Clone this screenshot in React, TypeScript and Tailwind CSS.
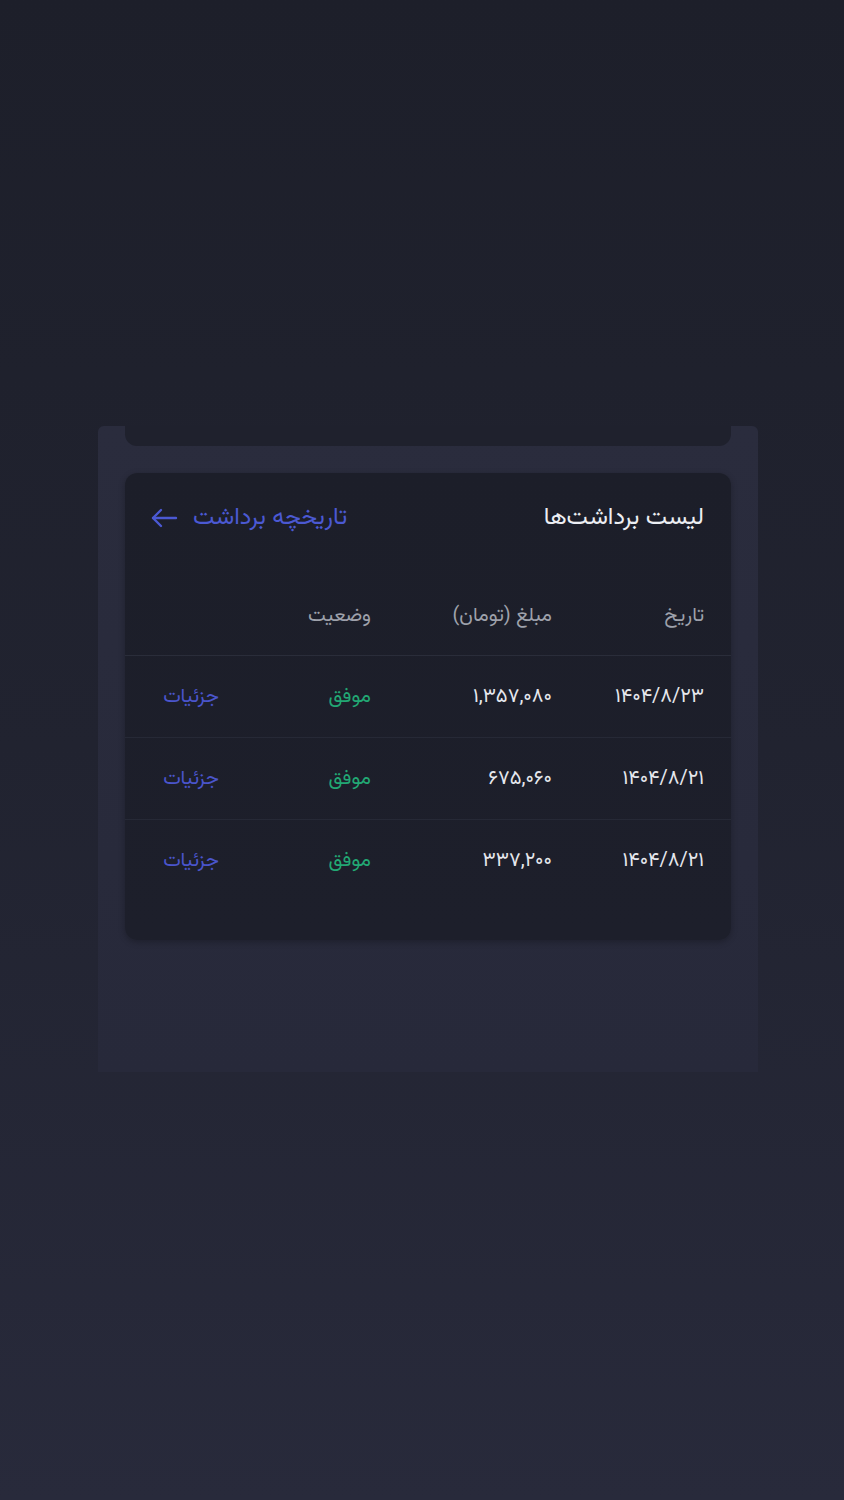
import React from "react";

const rows = [
  { date: "۱۴۰۴/۸/۲۳", amount: "۱,۳۵۷,۰۸۰" },
  { date: "۱۴۰۴/۸/۲۱", amount: "۶۷۵,۰۶۰" },
  { date: "۱۴۰۴/۸/۲۱", amount: "۳۳۷,۲۰۰" },
];

const font = { fontFamily: '"Vazirmatn", "Noto Sans Arabic", "DejaVu Sans", sans-serif' };

export default function App() {
  return (
    <div
      className="min-h-[1500px] w-full bg-gradient-to-b from-[#1d1f2a] via-[#212330] to-[#282a3b] pt-[426px]"
      style={font}
      dir="rtl"
    >
      <div className="mr-[86px] w-[660px] rounded-t-md bg-gradient-to-b from-[#2a2c3d] to-[#27293a] px-[27px] pb-[132px]">
        <div className="h-[20px] rounded-b-xl bg-[#1f212d]" />
        <div className="mt-[27px] h-[467px] rounded-xl bg-gradient-to-b from-[#1c1e29] to-[#1d1f2b] shadow-[0_2px_6px_rgba(0,0,0,0.25)]">
          <div className="flex h-[30px] translate-y-[30px] items-center justify-between pr-[27px] pl-[25px]">
            <div className="text-[24px] leading-none text-[#eceef3]">لیست برداشت‌ها</div>
            <div className="flex items-center gap-[15px] text-[24px] leading-none text-[#4b59d3]">
              <span>تاریخچه برداشت</span>
              <svg width="28" height="22" viewBox="0 0 28 22" fill="none" stroke="#4b59d3" strokeWidth="2.4" strokeLinecap="round" strokeLinejoin="round">
                <path d="M26 11H3" />
                <path d="M11 3L3 11L11 19" />
              </svg>
            </div>
          </div>
          <div className="mt-[73px]">
            <div className="grid h-[80px] grid-cols-[152px_181px_152px_1fr] items-center border-b border-[#2a2d3a] pr-[27px] text-[20px] text-[#9ea1ab]">
              <div>تاریخ</div>
              <div>مبلغ (تومان)</div>
              <div>وضعیت</div>
              <div />
            </div>
            {rows.map((r, i) => (
              <div
                key={i}
                className={`grid h-[82px] grid-cols-[152px_181px_152px_1fr] items-center pr-[27px] text-[20px] ${i < rows.length - 1 ? "border-b border-[#262936]" : ""}`}
              >
                <div className="text-[#e6e8ee]">{r.date}</div>
                <div className="text-[#e6e8ee]">{r.amount}</div>
                <div className="text-[#22a874]">موفق</div>
                <div className="text-[#4a55cc]">جزئیات</div>
              </div>
            ))}
          </div>
        </div>
      </div>
    </div>
  );
}
